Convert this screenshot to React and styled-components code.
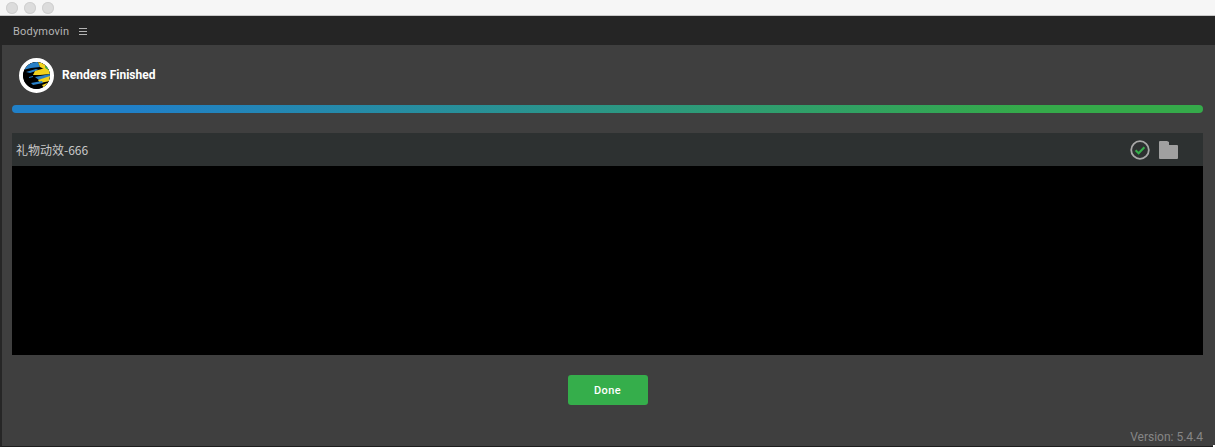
import React from 'react';
import styled, { createGlobalStyle } from 'styled-components';

const GlobalStyle = createGlobalStyle`
  html, body {
    margin: 0;
    padding: 0;
    background: #fff;
  }
  body {
    font-family: Roboto, 'Noto Sans CJK SC', sans-serif;
  }
`;

const Logo = () => (
  <LogoRing>
    <svg width="27" height="27" viewBox="0 0 27 27">
      <defs>
        <clipPath id="globe">
          <circle cx="13.5" cy="13.5" r="13.5" />
        </clipPath>
      </defs>
      <g clipPath="url(#globe)">
        <rect width="27" height="27" fill="#000" />
        <path d="M3 0h12l2 5-9 1-8 2z" fill="#2a80c6" />
        <path d="M15 0h12v8l-6-1-4-2z" fill="#f2d21d" />
        <path d="M22 4h5v7h-4z" fill="#36a84a" />
        <path d="M3 10l10-3 3 1-9 3z" fill="#2a80c6" />
        <path d="M12 9l10-3 5 3v3l-10 1-7 0z" fill="#f2d21d" />
        <path d="M12 15l15-3v3l-11 3z" fill="#2a80c6" />
        <path d="M15 18l12-4v5l-10 2z" fill="#f2d21d" />
        <path d="M8 21l11-2 1 2-10 2z" fill="#2a80c6" />
        <path d="M19 23l8-3v4l-6 2z" fill="#f2d21d" />
        <path d="M6 15l4-1v1l-4 1z" fill="#2a80c6" />
      </g>
    </svg>
  </LogoRing>
);

const CheckIcon = () => (
  <svg width="20" height="20" viewBox="0 0 20 20" fill="none">
    <circle cx="10" cy="10" r="8.8" stroke="#a8a8a8" strokeWidth="1.8" />
    <path d="M5.6 10.2l3 3 5.8-6" stroke="#35b04b" strokeWidth="2.1" />
  </svg>
);

const FolderIcon = () => (
  <svg width="19" height="18" viewBox="0 0 19 18">
    <path
      d="M1 0h7l2 1v3h8a1 1 0 0 1 1 1v12a1 1 0 0 1-1 1H1a1 1 0 0 1-1-1V1a1 1 0 0 1 1-1z"
      fill="#a0a0a0"
    />
  </svg>
);

const App = () => {
  return (
    <Window>
      <GlobalStyle />
      <TitleBar>
        <TrafficLight />
        <TrafficLight />
        <TrafficLight />
      </TitleBar>
      <TabBar>
        <TabTitle>Bodymovin</TabTitle>
        <MenuIcon>
          <span />
          <span />
          <span />
        </MenuIcon>
      </TabBar>
      <Panel>
        <Header>
          <Logo />
          <Heading>Renders Finished</Heading>
        </Header>
        <Progress />
        <RenderList>
          <RenderRow>
            <RenderName>礼物动效-666</RenderName>
            <RowIcons>
              <CheckIcon />
              <FolderIcon />
            </RowIcons>
          </RenderRow>
        </RenderList>
        <Actions>
          <DoneButton>Done</DoneButton>
        </Actions>
        <Version>Version: 5.4.4</Version>
        <ResizeCorner />
      </Panel>
    </Window>
  );
};

const Window = styled.div`
  width: 1215px;
  height: 447px;
  display: flex;
  flex-direction: column;
  overflow: hidden;
`;

const TitleBar = styled.div`
  flex: 0 0 16px;
  display: flex;
  align-items: center;
  gap: 6px;
  padding-left: 6px;
  box-sizing: border-box;
  background: #f6f6f6;
  border-bottom: 1px solid #c9c9c9;
`;

const TrafficLight = styled.span`
  width: 12px;
  height: 12px;
  border-radius: 50%;
  background: #dcdcdc;
  box-shadow: inset 0 0 0 1px #d0d0d0;
`;

const TabBar = styled.div`
  flex: 0 0 29px;
  display: flex;
  align-items: center;
  gap: 10px;
  padding: 1px 0 0 13px;
  box-sizing: border-box;
  background: #252525;
`;

const TabTitle = styled.span`
  font-size: 11px;
  letter-spacing: 0.2px;
  color: #b4b4b4;
`;

const MenuIcon = styled.span`
  width: 8px;
  display: flex;
  flex-direction: column;
  gap: 2px;

  & > span {
    height: 1px;
    background: #b4b4b4;
  }
`;

const Panel = styled.div`
  flex: 1;
  position: relative;
  display: flex;
  flex-direction: column;
  padding: 0 12px 40px 10px;
  box-sizing: border-box;
  background: #3f3f3f;
  border-left: 2px solid #262626;
  border-bottom: 1px solid #1e1e1e;
`;

const Header = styled.div`
  flex: 0 0 60px;
  display: flex;
  align-items: center;
  gap: 8px;
  padding-left: 7px;
`;

const LogoRing = styled.div`
  width: 27px;
  height: 27px;
  border: 4px solid #fff;
  border-radius: 50%;
  overflow: hidden;
  background: #000;
`;

const Heading = styled.h1`
  margin: 0;
  font-size: 12px;
  font-weight: 700;
  color: #fff;
`;

const Progress = styled.div`
  flex: 0 0 8px;
  border-radius: 4px;
  background: linear-gradient(90deg, #2080c8 0%, #2080c8 10%, #35aa4a 85%, #35aa4a 100%);
`;

const RenderList = styled.div`
  flex: 0 0 222px;
  margin-top: 20px;
  background: #000;
`;

const RenderRow = styled.div`
  height: 33px;
  display: flex;
  align-items: center;
  justify-content: space-between;
  padding: 0 25px 0 4px;
  background: #2d3131;
`;

const RenderName = styled.span`
  font-family: 'Noto Sans CJK SC', Roboto, sans-serif;
  font-size: 12px;
  color: #c8c8c8;
`;

const RowIcons = styled.div`
  display: flex;
  align-items: center;
  gap: 9px;
`;

const Actions = styled.div`
  display: flex;
  justify-content: center;
  margin-top: 20px;
`;

const DoneButton = styled.button`
  width: 80px;
  height: 30px;
  border: 0;
  border-radius: 3px;
  font-family: Roboto, sans-serif;
  font-size: 11px;
  font-weight: 500;
  letter-spacing: 0.4px;
  color: #fff;
  background: #35ae4b;
`;

const Version = styled.span`
  position: absolute;
  right: 12px;
  bottom: 2px;
  font-size: 12px;
  color: #868686;
`;

const ResizeCorner = styled.span`
  position: absolute;
  right: 0;
  bottom: -1px;
  width: 2px;
  height: 2px;
  background: #fff;
`;

export default App;
